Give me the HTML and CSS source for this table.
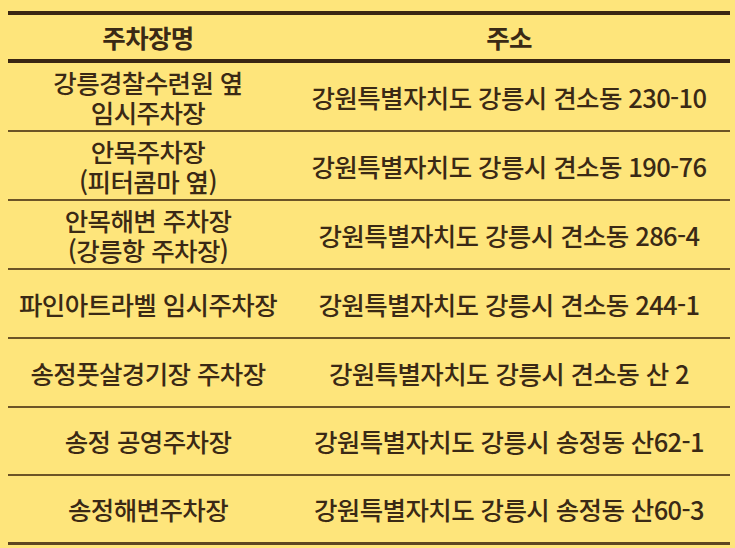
FILE: index.html
```html
<!DOCTYPE html>
<html lang="ko">
<head>
<meta charset="utf-8">
<link rel="stylesheet" href="styles.css">
</head>
<body>
<div class="table">
  <div class="row head">
    <div class="cell">주차장명</div>
    <div class="cell">주소</div>
  </div>
  <div class="row">
    <div class="cell">강릉경찰수련원 옆<br>임시주차장</div>
    <div class="cell">강원특별자치도 강릉시 견소동 230-10</div>
  </div>
  <div class="row">
    <div class="cell">안목주차장<br>(피터콤마 옆)</div>
    <div class="cell">강원특별자치도 강릉시 견소동 190-76</div>
  </div>
  <div class="row">
    <div class="cell">안목해변 주차장<br>(강릉항 주차장)</div>
    <div class="cell">강원특별자치도 강릉시 견소동 286-4</div>
  </div>
  <div class="row">
    <div class="cell">파인아트라벨 임시주차장</div>
    <div class="cell">강원특별자치도 강릉시 견소동 244-1</div>
  </div>
  <div class="row">
    <div class="cell">송정풋살경기장 주차장</div>
    <div class="cell">강원특별자치도 강릉시 견소동 산 2</div>
  </div>
  <div class="row">
    <div class="cell">송정 공영주차장</div>
    <div class="cell">강원특별자치도 강릉시 송정동 산62-1</div>
  </div>
  <div class="row last">
    <div class="cell">송정해변주차장</div>
    <div class="cell">강원특별자치도 강릉시 송정동 산60-3</div>
  </div>
</div>
</body>
</html>
```
FILE: styles.css
```css
html, body {
  margin: 0;
  padding: 0;
  background: #fee57b;
}
body {
  padding: 11px 5px 0 8px;
  font-family: "Noto Sans CJK KR", "Noto Sans", sans-serif;
  color: #3a2915;
}
.table {
  width: 722px;
  border-top: 4px solid #3a2613;
}
.row {
  display: grid;
  grid-template-columns: 280px 442px;
  height: 67px;
  border-bottom: 2px solid #6c5426;
}
.row.head {
  height: 44px;
  border-bottom: 4px solid #3a2613;
}
.row:nth-last-child(-n+2) {
  height: 66px;
}
.row.last {
  border-bottom: 3px solid #5e4620;
}
.cell {
  display: flex;
  align-items: center;
  justify-content: center;
  text-align: center;
  font-size: 25.5px;
  font-weight: 500;
  line-height: 30px;
  letter-spacing: -0.6px;
  white-space: nowrap;
}
.head .cell {
  font-weight: 700;
  font-size: 25.5px;
}
```
